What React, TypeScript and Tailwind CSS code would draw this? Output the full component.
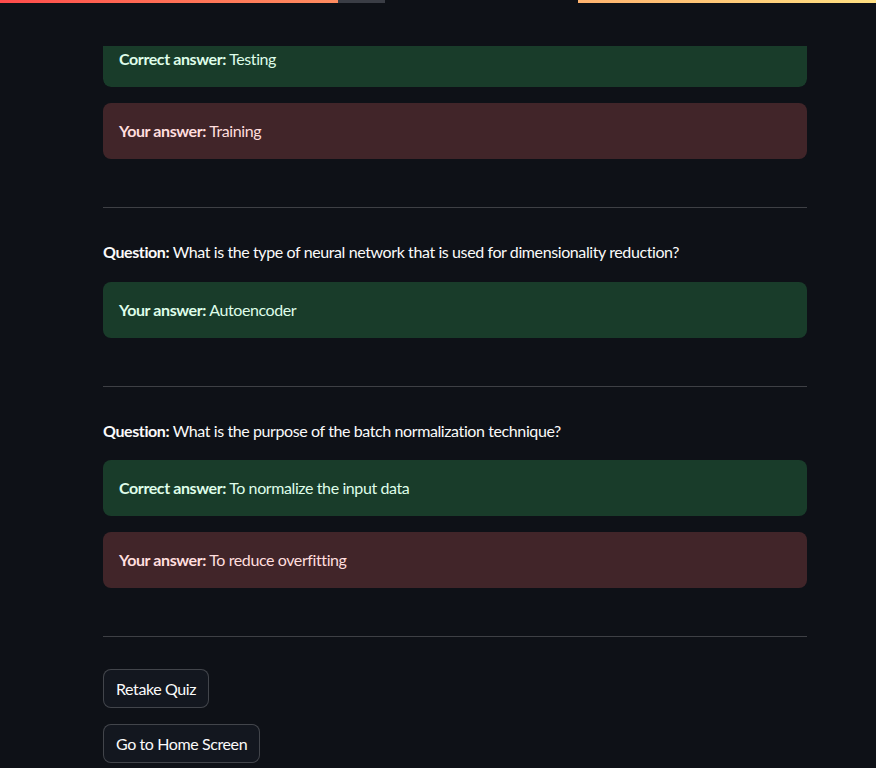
import React from "react";

const font = { fontFamily: '"Source Sans Pro", Lato, "Noto Sans", sans-serif' };

function Alert({ kind, label, text }: { kind: "ok" | "bad"; label: string; text: string }) {
  const cls =
    kind === "ok"
      ? "bg-[#193c2a] text-[#dffde9]"
      : "bg-[#412529] text-[#ffdede]";
  return (
    <div className={`${cls} rounded-lg px-4 py-4 h-[56px] flex items-center text-base leading-6`}>
      <span>
        <b className="font-bold">{label}</b> {text}
      </span>
    </div>
  );
}

function Hr() {
  return <div className="h-px bg-[#ffffff]/20 my-12" />;
}

export default function App() {
  return (
    <div className="w-[876px] h-[768px] overflow-hidden bg-[#0e1117] text-[#fafafa] tracking-[-0.4px]" style={font}>
      <div className="h-[46px] relative">
        <div className="h-[3px] w-full bg-gradient-to-r from-[#ff4b4b] to-[#ffe082] flex">
          <div className="ml-[338px] w-[47px] h-[3px] bg-[#3a3d45]" />
          <div className="w-[193px] h-[3px] bg-[#0e1117]" />
        </div>
      </div>
      <div className="w-[704px] ml-[103px] flex flex-col">
        <div className="h-[41px] overflow-hidden rounded-b-lg">
          <div className="-mt-[15px]">
            <Alert kind="ok" label="Correct answer:" text="Testing" />
          </div>
        </div>
        <div className="mt-4">
          <Alert kind="bad" label="Your answer:" text="Training" />
        </div>
        <Hr />
        <p className="-mt-4 leading-6 text-base">
          <b className="font-bold">Question:</b> What is the type of neural network that is used for dimensionality reduction?
        </p>
        <div className="mt-[18px]">
          <Alert kind="ok" label="Your answer:" text="Autoencoder" />
        </div>
        <Hr />
        <p className="-mt-4 leading-6 text-base">
          <b className="font-bold">Question:</b> What is the purpose of the batch normalization technique?
        </p>
        <div className="mt-[17px] flex flex-col gap-4">
          <Alert kind="ok" label="Correct answer:" text="To normalize the input data" />
          <Alert kind="bad" label="Your answer:" text="To reduce overfitting" />
        </div>
        <Hr />
        <div className="-mt-4 flex flex-col items-start gap-4">
          <button className="h-[39px] px-3 rounded-lg border border-[#ffffff]/20 bg-[#13171f] text-base text-[#fafafa]">
            Retake Quiz
          </button>
          <button className="h-[39px] px-3 rounded-lg border border-[#ffffff]/20 bg-[#13171f] text-base text-[#fafafa]">
            Go to Home Screen
          </button>
        </div>
      </div>
    </div>
  );
}
